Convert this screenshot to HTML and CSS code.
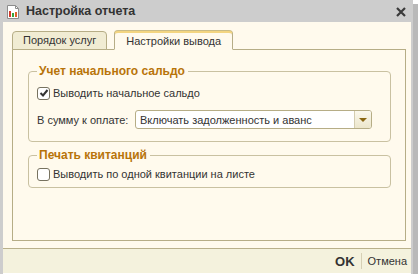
FILE: index.html
```html
<!DOCTYPE html>
<html>
<head>
  <title>Настройка отчета</title>
  <link rel="stylesheet" href="styles.css">
</head>
<body>

  <div class="window">
    <div class="titlebar">
      <svg class="app-icon" width="14" height="16" viewBox="0 0 14 16">
        <path d="M1.5 1.5 H9.5 L12.5 4.5 V14.5 H1.5 Z" fill="#fff" stroke="#8c8c8c"/>
        <path d="M9.5 1.5 V4.5 H12.5" fill="none" stroke="#8c8c8c"/>
        <rect x="3" y="7" width="2" height="6" fill="#d23a2a"/>
        <rect x="6" y="9" width="2" height="4" fill="#3aa53a"/>
        <rect x="9" y="8" width="2" height="5" fill="#e0602a"/>
      </svg>
      <span class="title">Настройка отчета</span>
      <svg class="close" width="10" height="10" viewBox="0 0 10 10">
        <path d="M1 1 L9 9 M9 1 L1 9" stroke="#3a3a3a" stroke-width="2.2"/>
      </svg>
    </div>

    <div class="body">
      <div class="main">
        <div class="tabs">
          <div class="tab">Порядок услуг</div>
          <div class="tab active">Настройки вывода</div>
        </div>

        <div class="panel">
          <fieldset class="group">
            <legend>Учет начального сальдо</legend>
            <label class="row check-row">
              <span class="checkbox checked">
                <svg width="10" height="10" viewBox="0 0 10 10">
                  <path d="M1.5 5 L4 7.5 L8.5 2" fill="none" stroke="#333" stroke-width="2"/>
                </svg>
              </span>
              Выводить начальное сальдо
            </label>
            <div class="row field-row">
              <span class="field-label">В сумму к оплате:</span>
              <div class="combo">
                <span class="combo-text">Включать задолженность и аванс</span>
                <span class="combo-btn"><span class="arrow"></span></span>
              </div>
            </div>
          </fieldset>

          <fieldset class="group second">
            <legend>Печать квитанций</legend>
            <label class="row check-row">
              <span class="checkbox"></span>
              Выводить по одной квитанции на листе
            </label>
          </fieldset>
        </div>
      </div>

      <div class="footer">
        <span class="btn ok">OK</span>
        <span class="sep"></span>
        <span class="btn">Отмена</span>
      </div>
    </div>
  </div>

</body>
</html>
```

FILE: styles.css
```css
body {
  margin: 0;
  background: #fff;
  font-family: 'Liberation Sans', Arial, sans-serif;
  font-size: 11px;
  color: #333;
}

.window {
  width: 413px;
  height: 274px;
  display: flex;
  flex-direction: column;
  box-shadow: 5px 4px 0 #b9b9b9;
}

.titlebar {
  height: 22px;
  flex: none;
  background: #cdcdcd;
  display: flex;
  align-items: center;
  padding: 0 7px 0 6px;
}

.app-icon {
  margin-top: 1px;
}

.title {
  font-size: 12.5px;
  font-weight: bold;
  margin-left: 6px;
  flex: 1;
}

.close {
  margin-top: 2px;
}

.body {
  flex: 1;
  display: flex;
  flex-direction: column;
  background: #fffaed;
  border-left: 3px solid #cdcdcd;
  border-right: 2px solid #cdcdcd;
}

.main {
  flex: 1;
  display: flex;
  flex-direction: column;
  padding: 9px 5px 7px 9px;
}

.tabs {
  display: flex;
  gap: 7px;
  height: 19px;
  margin-bottom: -1px;
  position: relative;
  z-index: 1;
}

.tab {
  box-sizing: border-box;
  height: 19px;
  padding: 0 10px;
  line-height: 17px;
  border: 1px solid #b6ad86;
  border-radius: 4px 4px 0 0;
  background: #f1ecd3;
}

.tab.active {
  padding: 0 11px;
  background: #fffaed;
  border-bottom-color: #fffaed;
  border-top: 2px solid #f3d581;
  line-height: 16px;
  box-shadow: 0 -1px 0 #c9bb86;
}

.panel {
  flex: 1;
  border: 1px solid #b6ad86;
  padding: 14px 14px 0 15px;
}

.group {
  margin: 0;
  border: 1px solid #c9c1a1;
  border-radius: 4px;
  padding: 0 8px 12px;
}

.group.second {
  margin-top: 6px;
  padding-bottom: 5px;
}

.group legend {
  padding: 0 3px 0 2px;
  font-size: 12px;
  font-weight: bold;
  color: #b8740a;
  line-height: 14px;
}

.row {
  display: flex;
  align-items: center;
  white-space: nowrap;
}

.check-row {
  height: 16px;
  margin-top: 7px;
}

.second .check-row {
  margin-top: 4px;
}

.checkbox {
  box-sizing: border-box;
  width: 13px;
  height: 13px;
  border: 1px solid #77725f;
  border-radius: 3px;
  background: #fff;
  margin-right: 3px;
  display: flex;
  align-items: center;
  justify-content: center;
}

.field-row {
  margin-top: 9px;
}

.field-label {
  width: 98px;
}

.combo {
  box-sizing: border-box;
  width: 237px;
  height: 19px;
  border: 1px solid #b6ad86;
  border-radius: 3px;
  background: #fff;
  display: flex;
  align-items: center;
}

.combo-text {
  flex: 1;
  padding-left: 4px;
}

.combo-btn {
  width: 16px;
  height: 17px;
  border-left: 1px solid #d4cdb0;
  border-radius: 0 2px 2px 0;
  background: linear-gradient(#fbf8ec, #ece6cc);
  display: flex;
  align-items: center;
  justify-content: center;
}

.arrow {
  width: 0;
  height: 0;
  border-left: 4px solid transparent;
  border-right: 4px solid transparent;
  border-top: 4px solid #8a6712;
}

.footer {
  height: 24px;
  flex: none;
  background: #f4f2dd;
  border-top: 1px solid #b9b08a;
  border-bottom: 1px solid #fff;
  display: flex;
  align-items: center;
  justify-content: flex-end;
  padding-right: 3px;
}

.btn {
  padding: 0 1px;
}

.btn.ok {
  font-weight: bold;
  font-size: 13px;
}

.sep {
  width: 1px;
  height: 16px;
  background: #d6d0b5;
  margin: 0 5px;
}
```
